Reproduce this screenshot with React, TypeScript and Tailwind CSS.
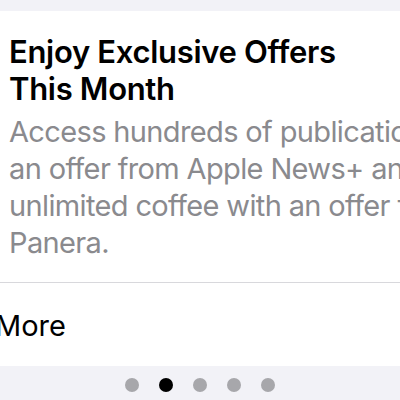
export default function App() {
  const dots = [false, true, false, false, false];

  return (
    <div className="w-[400px] h-[400px] overflow-hidden bg-[#f2f2f7] flex flex-col font-['Inter','Liberation_Sans',sans-serif]">
      {/* top gap */}
      <div className="h-[11px] shrink-0" />

      {/* card */}
      <div className="h-[355px] shrink-0 bg-white flex flex-col overflow-hidden">
        <div className="pl-[9px] pt-[22px]">
          <h1 className="text-[31px] leading-[37px] font-semibold text-black tracking-[-0.01em]">
            Enjoy Exclusive Offers
            <br />
            This Month
          </h1>
          <p className="mt-[6px] text-[29px] leading-[37px] text-[#8a8a8e] tracking-[-0.022em] whitespace-nowrap">
            Access hundreds of publications with
            <br />
            an offer from Apple News+ and
            <br />
            unlimited coffee with an offer from
            <br />
            Panera.
          </p>
        </div>

        <div className="mt-[21px] h-px bg-[#d8d8dc]" />

        <div className="mt-[26px] -ml-[5px] text-[29px] leading-[34px] text-black">More</div>
      </div>

      {/* page dots */}
      <div className="flex justify-center gap-[20px] pt-[12px]">
        {dots.map((active, i) => (
          <span
            key={i}
            className={active ? 'w-[14px] h-[14px] rounded-full bg-black' : 'w-[14px] h-[14px] rounded-full bg-[#a7a7ab]'}
          />
        ))}
      </div>
    </div>
  );
}
